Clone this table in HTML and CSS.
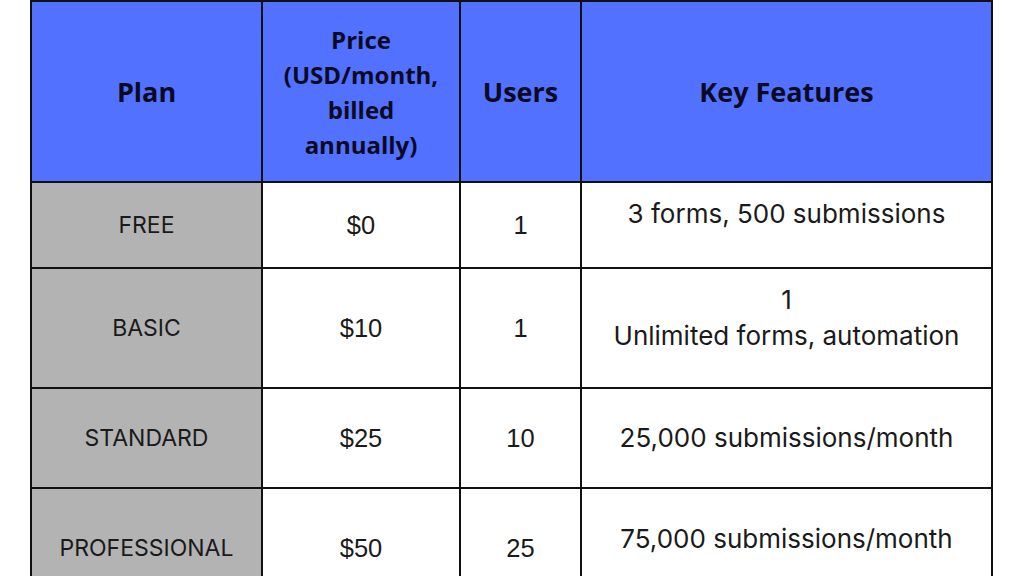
FILE: index.html
```html
<!DOCTYPE html>
<html>
<head>
<meta charset="utf-8">
<link rel="stylesheet" href="styles.css">
</head>
<body>
<table class="plans">
  <colgroup>
    <col class="c-plan"><col class="c-price"><col class="c-users"><col class="c-feat">
  </colgroup>
  <thead>
    <tr class="head">
      <th>Plan</th>
      <th class="small">Price<br>(USD/month,<br>billed<br>annually)</th>
      <th>Users</th>
      <th>Key Features</th>
    </tr>
  </thead>
  <tbody>
    <tr class="r1">
      <td class="name">FREE</td><td class="num">$0</td><td class="num">1</td><td class="feat up22">3 forms, 500 submissions</td>
    </tr>
    <tr class="r2">
      <td class="name">BASIC</td><td class="num">$10</td><td class="num">1</td><td class="feat up20">1<br>Unlimited forms, automation</td>
    </tr>
    <tr class="r3">
      <td class="name">STANDARD</td><td class="num">$25</td><td class="num">10</td><td class="feat">25,000 submissions/month</td>
    </tr>
    <tr class="r4">
      <td class="name">PROFESSIONAL</td><td class="num">$50</td><td class="num">25</td><td class="feat up18">75,000 submissions/month</td>
    </tr>
  </tbody>
</table>
</body>
</html>
```
FILE: styles.css
```css
html, body {
  margin: 0;
  padding: 0;
  background: #ffffff;
}
body {
  width: 1024px;
  height: 576px;
  overflow: hidden;
}
.plans {
  margin-left: 30px;
  border-collapse: collapse;
  table-layout: fixed;
  width: 961px;
}
.c-plan { width: 231px; }
.c-price { width: 198px; }
.c-users { width: 121px; }
.c-feat { width: 411px; }
.plans th, .plans td {
  border: 2px solid #111111;
  padding: 0;
  text-align: center;
  vertical-align: middle;
}
.plans th {
  background: #5271ff;
  color: #0a0a22;
  font-family: "Open Sans", "Liberation Sans", sans-serif;
  font-weight: 700;
  font-size: 27px;
  line-height: 35px;
}
.plans th.small {
  font-size: 24px;
}
.plans td {
  font-family: Inter, "Liberation Sans", sans-serif;
  font-size: 23px;
  color: #1a1a1a;
  line-height: 36px;
}
.plans td.num {
  font-family: "Liberation Sans", Arial, sans-serif;
  font-size: 25.5px;
}
.plans td.feat {
  font-size: 26px;
}
.plans td.name {
  background: #b3b3b3;
}
.head { height: 181px; }
.r1 { height: 86px; }
.r2 { height: 120px; }
.r3 { height: 100px; }
.r4 { height: 119px; }
.up22 { padding-bottom: 22px !important; }
.up20 { padding-bottom: 20px !important; }
.up18 { padding-bottom: 18px !important; }
```
